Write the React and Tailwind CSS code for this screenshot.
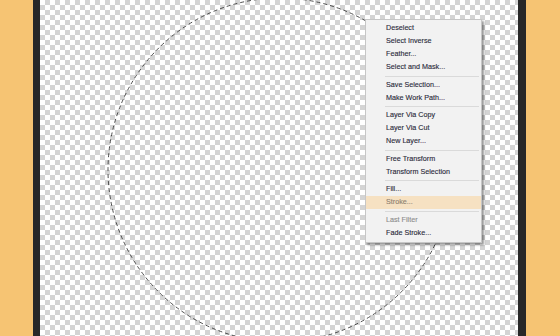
import React from 'react';

const menu = [
    ['Deselect', 'Select Inverse', 'Feather...', 'Select and Mask...'],
    ['Save Selection...', 'Make Work Path...'],
    ['Layer Via Copy', 'Layer Via Cut', 'New Layer...'],
    ['Free Transform', 'Transform Selection'],
    ['Fill...', 'Stroke...'],
    ['Last Filter', 'Fade Stroke...'],
];

const ContextMenu = () => (
    <div className="absolute left-[325px] top-[19px] w-[117px] bg-[#f2f2f2] border border-[#c6c6c6] pt-[2px] pb-[2px] shadow-[2px_2px_2px_rgba(0,0,0,0.4)] font-['Liberation_Sans',Arial,sans-serif] text-[7.2px] text-[#2a2a3a] [-webkit-text-stroke:0.12px_currentColor]">
        {menu.map((group, gi) => (
            <div key={gi}>
                {gi > 0 && (
                    <div className="h-[4.5px] flex items-center pl-[19px] pr-[2px]">
                        <div className="h-px w-full bg-[#dadada]" />
                    </div>
                )}
                {group.map((item) => {
                    const active = item === 'Stroke...';
                    const disabled = item === 'Last Filter';
                    return (
                        <div
                            key={item}
                            className={`h-[13px] flex items-center pl-[20px] ${
                                active ? 'bg-[#f6e1c2] text-[#8f8270]' : disabled ? 'text-[#8c8c8c]' : ''
                            }`}
                        >
                            {item}
                        </div>
                    );
                })}
            </div>
        ))}
    </div>
);

export default function App() {
    return (
        <div className="w-[560px] h-[336px] flex overflow-hidden">
            <div className="w-[33px] bg-[#f6c473]" />
            <div className="w-[7px] bg-[#282828]" />

            <div className="relative flex-1 bg-[conic-gradient(#d4d4d4_25%,#ffffff_0_50%,#d4d4d4_0_75%,#ffffff_0)] bg-[length:10px_10px]">
                <svg className="absolute inset-0" width="478" height="336">
                    <circle cx="240" cy="170" r="172" fill="none" stroke="#3a3a3a" strokeWidth="0.9" strokeDasharray="4 3" />
                </svg>
                <ContextMenu />
            </div>

            <div className="w-[8px] bg-[#282828]" />
            <div className="w-[34px] bg-[#f6c473]" />
        </div>
    );
}
